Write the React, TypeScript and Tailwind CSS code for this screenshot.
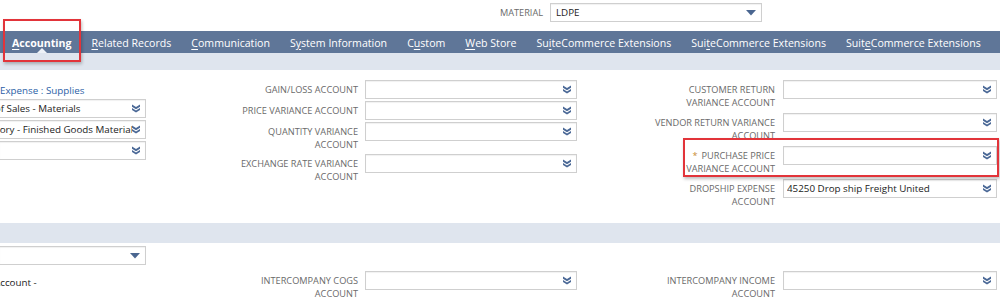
import React from "react";

const FONT = { fontFamily: '"Open Sans", "Noto Sans", Arial, sans-serif' };

function Chevrons() {
  return (
    <svg width="8" height="9" viewBox="0 0 8 9" className="shrink-0">
      <path
        d="M0 0.6 L4 3.1 L8 0.6 V2.7 L4 5.2 L0 2.7Z M0 3.9 L4 6.4 L8 3.9 V6 L4 8.5 L0 6Z"
        fill="#4a6896"
      />
    </svg>
  );
}

function Caret() {
  return (
    <svg width="10" height="6" viewBox="0 0 10 6" className="shrink-0">
      <path d="M0 0 H10 L5 5.5Z" fill="#4a6690" />
    </svg>
  );
}

function Select({
  className = "",
  value = "",
  caret = false,
  textClass = "",
}: {
  className?: string;
  value?: string;
  caret?: boolean;
  textClass?: string;
}) {
  return (
    <div
      className={
        "h-[19px] shrink-0 border border-[#cfcfcf] bg-white flex items-center pl-[3px] pr-[5px] shadow-[inset_0_1px_1px_rgba(0,0,0,0.06)] " +
        className
      }
    >
      <span
        className={
          "flex-1 min-w-0 overflow-hidden whitespace-nowrap text-[9.8px] leading-[17px] text-[#222222] " +
          textClass
        }
      >
        {value}
      </span>
      {caret ? <Caret /> : <Chevrons />}
    </div>
  );
}

function Label({ lines, required = false }: { lines: string[]; required?: boolean }) {
  return (
    <div className="w-full text-right text-[9.2px] leading-[13px] text-[#6a6a6a] uppercase pt-[3px] whitespace-nowrap">
      {lines.map((l, i) => (
        <div key={i}>
          {i === 0 && required ? <span className="text-[#c98a2e] mr-[4px]">*</span> : null}
          {l}
        </div>
      ))}
    </div>
  );
}

function Field({
  lines,
  labelW,
  boxW,
  gap,
  value,
  required,
  tall = false,
}: {
  lines: string[];
  labelW: string;
  boxW: string;
  gap: string;
  value?: string;
  required?: boolean;
  tall?: boolean;
}) {
  return (
    <div className={"flex items-start " + gap + (tall ? " h-[30px]" : " h-[19px]")}>
      <div className={labelW + " shrink-0"}>
        <Label lines={lines} required={required} />
      </div>
      <Select className={boxW} value={value} />
    </div>
  );
}

function Tab({ pre, u, post, active = false }: { pre: string; u: string; post: string; active?: boolean }) {
  return (
    <div className="relative h-full flex items-center shrink-0 pt-[3px]">
      <span className={"text-[10.6px] text-white whitespace-nowrap " + (active ? "font-bold" : "")}>
        {pre}
        <span className="underline underline-offset-[2px]">{u}</span>
        {post}
      </span>
      {active ? (
        <div className="absolute bottom-0 left-1/2 -translate-x-1/2 w-0 h-0 border-l-[5px] border-r-[5px] border-b-[5px] border-l-transparent border-r-transparent border-b-[#eef2f7]" />
      ) : null}
    </div>
  );
}

export default function App() {
  const c2Label = "w-[212px]";
  const c2Box = "w-[212px]";
  const c3Label = "w-[198px]";
  const c3Box = "w-[214px]";
  return (
    <div className="relative w-[1000px] h-[305px] overflow-hidden bg-white" style={FONT}>
      {/* header */}
      <div className="h-[31px] flex items-start pt-[3px]">
        <div className="w-[543px] shrink-0 text-right text-[9.2px] leading-[19px] text-[#6a6a6a] uppercase">
          Material
        </div>
        <Select className="w-[212px] ml-[7px]" value="LDPE" caret textClass="pl-[2px]" />
      </div>

      {/* tab bar */}
      <div className="h-[22px] bg-[#5f7698] flex items-stretch pl-[12px] gap-[20px] overflow-hidden">
        <Tab pre="" u="A" post="ccounting" active />
        <Tab pre="" u="R" post="elated Records" />
        <Tab pre="" u="C" post="ommunication" />
        <Tab pre="S" u="y" post="stem Information" />
        <Tab pre="C" u="u" post="stom" />
        <Tab pre="" u="W" post="eb Store" />
        <Tab pre="Su" u="i" post="teCommerce Extensions" />
        <Tab pre="Sui" u="t" post="eCommerce Extensions" />
        <Tab pre="Suit" u="e" post="Commerce Extensions" />
        <Tab pre="" u="T" post="ransactions" />
      </div>

      {/* band */}
      <div className="h-[17px] bg-[#dfe5ee]" />

      {/* main section */}
      <div className="h-[153px] flex items-start pt-[10px]">
        {/* col 1 */}
        <div className="w-[146px] shrink-0 overflow-hidden flex flex-col">
          <div className="h-[19px] pt-[3px] flex items-center text-[9.8px] text-[#2a5ea6] whitespace-nowrap">
            Expense : Supplies
          </div>
          <Select className="w-[147px] -ml-[1px]" value="Cost of Sales - Materials" textClass="-ml-[31px]" />
          <Select
            className="w-[147px] -ml-[1px] mt-[2px]"
            value="Inventory - Finished Goods Materials"
            textClass="-ml-[32px]"
          />
          <Select className="w-[147px] -ml-[1px] mt-[2px]" />
        </div>
        {/* col 2 */}
        <div className="flex flex-col gap-[2px]">
          <Field lines={["Gain/Loss Account"]} labelW={c2Label} boxW={c2Box} gap="gap-[7px]" />
          <Field lines={["Price Variance Account"]} labelW={c2Label} boxW={c2Box} gap="gap-[7px]" />
          <Field lines={["Quantity Variance", "Account"]} labelW={c2Label} boxW={c2Box} gap="gap-[7px]" tall />
          <Field
            lines={["Exchange Rate Variance", "Account"]}
            labelW={c2Label}
            boxW={c2Box}
            gap="gap-[7px]"
            tall
          />
        </div>
        {/* col 3 */}
        <div className="flex flex-col gap-[3px]">
          <Field
            lines={["Customer Return", "Variance Account"]}
            labelW={c3Label}
            boxW={c3Box}
            gap="gap-[8px]"
            tall
          />
          <Field
            lines={["Vendor Return Variance", "Account"]}
            labelW={c3Label}
            boxW={c3Box}
            gap="gap-[8px]"
            tall
          />
          <Field
            lines={["Purchase Price", "Variance Account"]}
            labelW={c3Label}
            boxW={c3Box}
            gap="gap-[8px]"
            tall
            required
          />
          <Field
            lines={["Dropship Expense", "Account"]}
            labelW={c3Label}
            boxW={c3Box}
            gap="gap-[8px]"
            tall
            value="45250 Drop ship Freight United"
          />
        </div>
      </div>

      {/* band 2 */}
      <div className="h-[20px] bg-[#dfe5ee]" />

      {/* bottom section */}
      <div className="flex items-start">
        <div className="w-[146px] shrink-0 overflow-hidden flex flex-col pt-[3px]">
          <Select className="w-[147px] -ml-[1px]" caret />
          <div className="mt-[11px] text-[9.8px] leading-[13px] text-[#222222] whitespace-nowrap -ml-[6px]">
            Account -
          </div>
        </div>
        <div className="pt-[28px]">
          <Field
            lines={["Intercompany COGS", "Account"]}
            labelW={c2Label}
            boxW={c2Box}
            gap="gap-[7px]"
            tall
          />
        </div>
        <div className="pt-[28px]">
          <Field
            lines={["Intercompany Income", "Account"]}
            labelW={c3Label}
            boxW={c3Box}
            gap="gap-[8px]"
            tall
          />
        </div>
      </div>

      {/* annotation boxes */}
      <div className="absolute left-[3px] top-[19px] w-[78px] h-[43px] border-2 border-[#e2343a] shadow-[1px_2px_3px_rgba(0,0,0,0.25)] pointer-events-none" />
      <div className="absolute left-[683px] top-[138px] w-[316px] h-[39px] border-2 border-[#e2343a] shadow-[1px_2px_3px_rgba(0,0,0,0.25)] pointer-events-none" />
    </div>
  );
}
